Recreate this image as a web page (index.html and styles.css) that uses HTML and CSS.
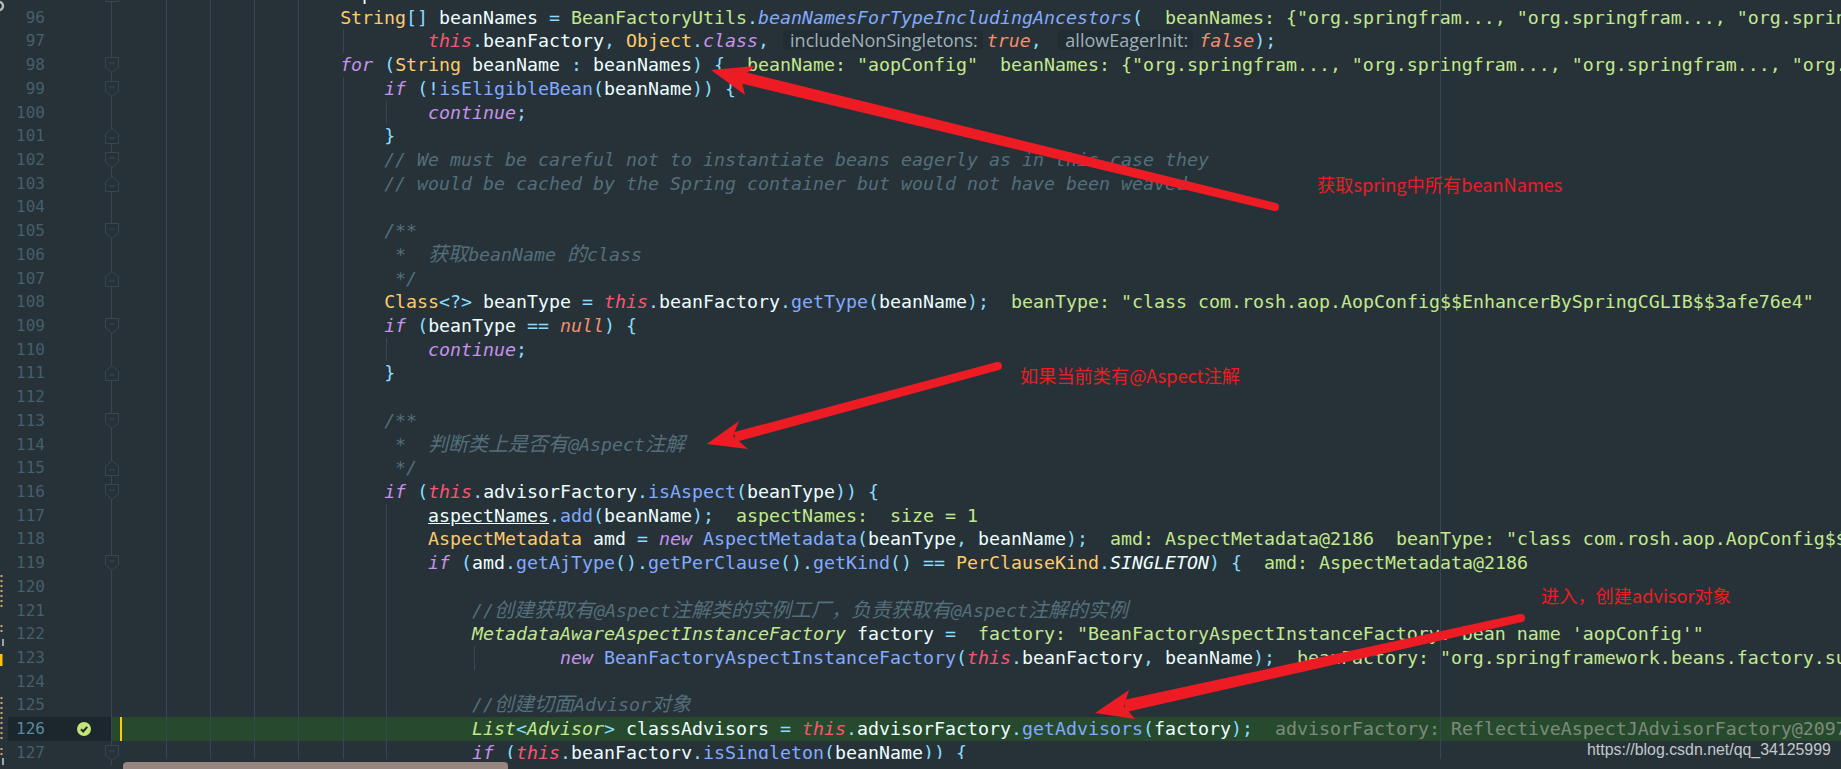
FILE: index.html
```html
<!DOCTYPE html>
<html lang="en">
<head>
<meta charset="utf-8">
<title>AnnotationAwareAspectJ source</title>
<link rel="stylesheet" href="styles.css">
</head>
<body>
<svg width="0" height="0" class="defs">
  <defs>
    <g id="fold-open"><path d="M.5 .5H13.5V10L7 15.5.5 10Z"/><path d="M4 6H10"/></g>
    <g id="fold-close"><path d="M.5 15.5H13.5V6L7 .5.5 6Z"/><path d="M4 10H10"/></g>
  </defs>
</svg>
<main class="editor">
  <div class="lines">
    <div class="row"><div class="gutter"><span class="num">95</span><svg class="fold" viewBox="0 0 14 16"><use href="#fold-close"/></svg></div><div class="code">                    aspectNames</div></div>

    <div class="row"><div class="gutter"><span class="num">96</span></div><div class="code">                    <span class="y">String</span><span class="p">[]</span> beanNames <span class="p">=</span> <span class="g">BeanFactoryUtils</span><span class="p">.</span><span class="mi">beanNamesForTypeIncludingAncestors</span><span class="p">(</span>  <span class="d">beanNames: {"org.springfram..., "org.springfram..., "org.springfram..., "org.springfram...</span></div></div>

    <div class="row g5"><div class="gutter"><span class="num">97</span></div><div class="code">                            <span class="t">this</span><span class="p">.</span>beanFactory<span class="p">,</span> <span class="y">Object</span><span class="p">.</span><span class="k">class</span><span class="p">,</span> <span class="hint">includeNonSingletons:</span><span class="l">true</span><span class="p">,</span> <span class="hint hint-b">allowEagerInit:</span><span class="l">false</span><span class="p">);</span></div></div>

    <div class="row"><div class="gutter"><span class="num">98</span><svg class="fold" viewBox="0 0 14 16"><use href="#fold-open"/></svg></div><div class="code">                    <span class="k">for</span> <span class="p">(</span><span class="y">String</span> beanName <span class="p">:</span> beanNames<span class="p">)</span> <span class="p">{</span>  <span class="d">beanName: "aopConfig"  beanNames: {"org.springfram..., "org.springfram..., "org.springfram..., "org.springfram...</span></div></div>

    <div class="row g5"><div class="gutter"><span class="num">99</span><svg class="fold" viewBox="0 0 14 16"><use href="#fold-open"/></svg></div><div class="code">                        <span class="k">if</span> <span class="p">(!</span><span class="m">isEligibleBean</span><span class="p">(</span>beanName<span class="p">))</span> <span class="p">{</span></div></div>

    <div class="row g5 g6"><div class="gutter"><span class="num">100</span></div><div class="code">                            <span class="k">continue</span><span class="p">;</span></div></div>

    <div class="row g5"><div class="gutter"><span class="num">101</span><svg class="fold" viewBox="0 0 14 16"><use href="#fold-close"/></svg></div><div class="code">                        <span class="p">}</span></div></div>

    <div class="row g5"><div class="gutter"><span class="num">102</span><svg class="fold" viewBox="0 0 14 16"><use href="#fold-open"/></svg></div><div class="code">                        <span class="c">// We must be careful not to instantiate beans eagerly as in this case they</span></div></div>

    <div class="row g5"><div class="gutter"><span class="num">103</span><svg class="fold" viewBox="0 0 14 16"><use href="#fold-close"/></svg></div><div class="code">                        <span class="c">// would be cached by the Spring container but would not have been weaved.</span></div></div>

    <div class="row g5"><div class="gutter"><span class="num">104</span></div><div class="code"></div></div>

    <div class="row g5"><div class="gutter"><span class="num">105</span><svg class="fold" viewBox="0 0 14 16"><use href="#fold-open"/></svg></div><div class="code">                        <span class="c">/**</span></div></div>

    <div class="row g5"><div class="gutter"><span class="num">106</span></div><div class="code">                        <span class="c"> *  <span class="cn">获取</span>beanName <span class="cn">的</span>class</span></div></div>

    <div class="row g5"><div class="gutter"><span class="num">107</span><svg class="fold" viewBox="0 0 14 16"><use href="#fold-close"/></svg></div><div class="code">                        <span class="c"> */</span></div></div>

    <div class="row g5"><div class="gutter"><span class="num">108</span></div><div class="code">                        <span class="y">Class</span><span class="p">&lt;?&gt;</span> beanType <span class="p">=</span> <span class="t">this</span><span class="p">.</span>beanFactory<span class="p">.</span><span class="m">getType</span><span class="p">(</span>beanName<span class="p">);</span>  <span class="d">beanType: "class com.rosh.aop.AopConfig$$EnhancerBySpringCGLIB$$3afe76e4"</span></div></div>

    <div class="row g5"><div class="gutter"><span class="num">109</span><svg class="fold" viewBox="0 0 14 16"><use href="#fold-open"/></svg></div><div class="code">                        <span class="k">if</span> <span class="p">(</span>beanType <span class="p">==</span> <span class="l">null</span><span class="p">)</span> <span class="p">{</span></div></div>

    <div class="row g5 g6"><div class="gutter"><span class="num">110</span></div><div class="code">                            <span class="k">continue</span><span class="p">;</span></div></div>

    <div class="row g5"><div class="gutter"><span class="num">111</span><svg class="fold" viewBox="0 0 14 16"><use href="#fold-close"/></svg></div><div class="code">                        <span class="p">}</span></div></div>

    <div class="row g5"><div class="gutter"><span class="num">112</span></div><div class="code"></div></div>

    <div class="row g5"><div class="gutter"><span class="num">113</span><svg class="fold" viewBox="0 0 14 16"><use href="#fold-open"/></svg></div><div class="code">                        <span class="c">/**</span></div></div>

    <div class="row g5"><div class="gutter"><span class="num">114</span></div><div class="code">                        <span class="c"> *  <span class="cn">判断类上是否有</span>@Aspect<span class="cn">注解</span></span></div></div>

    <div class="row g5"><div class="gutter"><span class="num">115</span><svg class="fold" viewBox="0 0 14 16"><use href="#fold-close"/></svg></div><div class="code">                        <span class="c"> */</span></div></div>

    <div class="row g5"><div class="gutter"><span class="num">116</span><svg class="fold" viewBox="0 0 14 16"><use href="#fold-open"/></svg></div><div class="code">                        <span class="k">if</span> <span class="p">(</span><span class="t">this</span><span class="p">.</span>advisorFactory<span class="p">.</span><span class="m">isAspect</span><span class="p">(</span>beanType<span class="p">))</span> <span class="p">{</span></div></div>

    <div class="row g5 g6"><div class="gutter"><span class="num">117</span></div><div class="code">                            <span class="u">aspectNames</span><span class="p">.</span><span class="m">add</span><span class="p">(</span>beanName<span class="p">);</span>  <span class="d">aspectNames:  size = 1</span></div></div>

    <div class="row g5 g6"><div class="gutter"><span class="num">118</span></div><div class="code">                            <span class="y">AspectMetadata</span> amd <span class="p">=</span> <span class="k">new</span> <span class="m">AspectMetadata</span><span class="p">(</span>beanType<span class="p">,</span> beanName<span class="p">);</span>  <span class="d">amd: AspectMetadata@2186  beanType: "class com.rosh.aop.AopConfig$$EnhancerBySpringCGLIB$$3afe76e4"</span></div></div>

    <div class="row g5 g6"><div class="gutter"><span class="num">119</span><svg class="fold" viewBox="0 0 14 16"><use href="#fold-open"/></svg></div><div class="code">                            <span class="k">if</span> <span class="p">(</span>amd<span class="p">.</span><span class="m">getAjType</span><span class="p">().</span><span class="m">getPerClause</span><span class="p">().</span><span class="m">getKind</span><span class="p">()</span> <span class="p">==</span> <span class="y">PerClauseKind</span><span class="p">.</span><span class="i">SINGLETON</span><span class="p">)</span> <span class="p">{</span>  <span class="d">amd: AspectMetadata@2186</span></div></div>

    <div class="row g5 g6"><div class="gutter"><span class="num">120</span></div><div class="code"></div></div>

    <div class="row g5 g6"><div class="gutter"><span class="num">121</span></div><div class="code">                                <span class="c">//<span class="cn">创建获取有</span>@Aspect<span class="cn">注解类的实例工厂，负责获取有</span>@Aspect<span class="cn">注解的实例</span></span></div></div>

    <div class="row g5 g6"><div class="gutter"><span class="num">122</span></div><div class="code">                                <span class="gi">MetadataAwareAspectInstanceFactory</span> factory <span class="p">=</span>  <span class="d">factory: "BeanFactoryAspectInstanceFactory: bean name 'aopConfig'"</span></div></div>

    <div class="row g5 g6 g8"><div class="gutter"><span class="num">123</span></div><div class="code">                                        <span class="k">new</span> <span class="m">BeanFactoryAspectInstanceFactory</span><span class="p">(</span><span class="t">this</span><span class="p">.</span>beanFactory<span class="p">,</span> beanName<span class="p">);</span>  <span class="d">beanFactory: "org.springframework.beans.factory.support.DefaultListable</span></div></div>

    <div class="row g5 g6"><div class="gutter"><span class="num">124</span></div><div class="code"></div></div>

    <div class="row g5 g6"><div class="gutter"><span class="num">125</span></div><div class="code">                                <span class="c">//<span class="cn">创建切面</span>Advisor<span class="cn">对象</span></span></div></div>

    <div class="row g5 g6 active"><div class="gutter"><span class="num">126</span><svg class="mark" viewBox="0 0 14 14"><circle cx="7" cy="7" r="7"/><path d="M4 7.2 6.2 9.5 10.2 4.8"/></svg></div><div class="code"><span class="caret"></span>                                <span class="gi">List</span><span class="p">&lt;</span><span class="gi">Advisor</span><span class="p">&gt;</span> classAdvisors <span class="p">=</span> <span class="t">this</span><span class="p">.</span>advisorFactory<span class="p">.</span><span class="m">getAdvisors</span><span class="p">(</span>factory<span class="p">);</span>  <span class="dim">advisorFactory: ReflectiveAspectJAdvisorFactory@2097</span></div></div>

    <div class="row g5 g6"><div class="gutter"><span class="num">127</span><svg class="fold" viewBox="0 0 14 16"><use href="#fold-open"/></svg></div><div class="code">                                <span class="k">if</span> <span class="p">(</span><span class="t">this</span><span class="p">.</span>beanFactory<span class="p">.</span><span class="m">isSingleton</span><span class="p">(</span>beanName<span class="p">))</span> <span class="p">{</span></div></div>
  </div>

  <div class="track"><div class="thumb"></div></div>

  <svg class="overlay" viewBox="0 0 1841 769" aria-hidden="true">
    <circle class="pin" cx="-1" cy="6" r="4"/>
    <path class="dots" d="M1.5 575V610M1.5 625V632M1.5 697V742M1.5 748V757"/>
    <path class="bar" d="M3 639V646M3 758V765"/>
    <rect class="warn" x="0" y="654" width="2.5" height="12"/>
    <g class="arrow">
      <path d="M711 70 755 66 741 78 745 95Z"/>
      <path d="M741.4 71.2 738.6 82.8 1274 211 1276 203Z"/>
      <circle cx="1275" cy="207" r="4"/>
      <path d="M706.6 444 739 421 733 436 748 449Z"/>
      <path d="M736.3 441.8 733.7 432.2 997 362 999 370Z"/>
      <circle cx="998" cy="366" r="4"/>
      <path d="M1095 713 1129 690 1124 706 1135 719Z"/>
      <path d="M1126.3 711.9 1123.7 700.1 1520 614 1522 622Z"/>
      <circle cx="1521" cy="618" r="4"/>
    </g>
  </svg>

  <span class="note note-a">获取spring中所有beanNames</span>
  <span class="note note-b">如果当前类有@Aspect注解</span>
  <span class="note note-c">进入，创建advisor对象</span>
  <span class="watermark">https://blog.csdn.net/qq_34125999</span>
</main>
</body>
</html>
```

FILE: styles.css
```css
html, body {
  margin: 0;
  padding: 0;
  background: #263238;
}

.defs {
  position: absolute;
}

.editor {
  position: relative;
  width: 1841px;
  height: 769px;
  overflow: hidden;
  background: #263238;
  font-family: "DejaVu Sans Mono", "Noto Sans CJK SC", monospace;
  font-size: 18.27px;
  color: #eeffff;
}

.lines {
  margin-top: -18.1px;
}

.row {
  display: flex;
  height: 23.73px;
  line-height: 23.73px;
}

.gutter {
  position: relative;
  z-index: 2;
  flex: none;
  display: flex;
  align-items: center;
  box-sizing: border-box;
  width: 104px;
  margin-left: 8px;
  border-right: 1px solid #37474f;
}

.num {
  width: 37px;
  text-align: right;
  font-size: 16px;
  color: #455f6b;
}

.fold {
  position: absolute;
  right: -8px;
  top: 4px;
  width: 14px;
  height: 16px;
  fill: #263238;
  stroke: #37474f;
  stroke-width: 1;
}

.mark {
  width: 14px;
  height: 14px;
  margin-left: 31.5px;
  fill: #c5e478;
}

.mark path {
  fill: none;
  stroke: #1c262d;
  stroke-width: 2;
}

.code {
  --line: #37474f;
  --a: transparent;
  --b: transparent;
  --c: transparent;
  position: relative;
  flex: 1;
  min-width: 0;
  box-sizing: border-box;
  padding-left: 8.2px;
  white-space: pre;
  overflow: hidden;
  background-repeat: no-repeat;
  background-size: 1px 100%;
  background-image:
    linear-gradient(var(--line), var(--line)),
    linear-gradient(var(--line), var(--line)),
    linear-gradient(var(--line), var(--line)),
    linear-gradient(var(--line), var(--line)),
    linear-gradient(var(--a), var(--a)),
    linear-gradient(var(--b), var(--b)),
    linear-gradient(var(--c), var(--c)),
    linear-gradient(var(--line), var(--line));
  background-position: 54px 0, 98px 0, 142px 0, 186px 0, 231px 0, 274px 0, 362px 0, 1328px 0;
}

.g5 .code { --a: #37474f; }
.g6 .code { --b: #37474f; }
.g8 .code { --c: #37474f; }

.active .gutter { background: #1c262d; }
.active .num { color: #5b8a9f; }
.active .code { background-color: #274a2e; }

.caret {
  position: absolute;
  left: 8px;
  top: 0;
  width: 2px;
  height: 100%;
  background: #ffcc00;
}

.k { color: #c792ea; font-style: italic; }
.t { color: #ff5370; font-style: italic; }
.y { color: #ffcb6b; }
.g { color: #c3e88d; }
.gi { color: #c3e88d; font-style: italic; }
.m { color: #82aaff; }
.mi { color: #82aaff; font-style: italic; }
.p { color: #89ddff; }
.c { color: #546e7a; font-style: italic; }
.cn { font-size: 20px; line-height: 1; }
.l { color: #f78c6c; font-style: italic; }
.i { font-style: italic; }
.u { text-decoration: underline; }
.d { color: #c3e88d; }
.dim { color: #7d8a7b; }

.hint {
  display: inline-block;
  height: 20px;
  line-height: 20px;
  padding: 0 5px 0 7px;
  margin: 0 4px 0 3px;
  border-radius: 4px;
  background: #222c33;
  color: #9fb0b8;
  font-family: "Open Sans", sans-serif;
  font-size: 18px;
}

.hint-b {
  margin: 0 6px 0 5.5px;
}

.track {
  position: absolute;
  left: 120px;
  right: 0;
  bottom: 0;
  height: 10px;
  background: #263238;
}

.thumb {
  width: 385px;
  height: 7px;
  margin: 3px 0 0 2.7px;
  border-radius: 4px 4px 0 0;
  background: #97867f;
}

.overlay {
  position: absolute;
  left: 0;
  top: 0;
  z-index: 3;
  width: 1841px;
  height: 769px;
  pointer-events: none;
}

.pin { fill: #1c262d; stroke: #b5b5b5; stroke-width: 2.5; }
.dots { fill: none; stroke: #c9a96e; stroke-width: 2; stroke-dasharray: 2 3; }
.bar { fill: none; stroke: #9aa5a8; stroke-width: 2; }
.warn { fill: #ffc107; }
.arrow { fill: #ed1c24; }

.note {
  position: absolute;
  z-index: 4;
  color: #ed1c24;
  font-family: "Noto Sans CJK SC", sans-serif;
  font-size: 18.2px;
  line-height: 24px;
  white-space: nowrap;
}

.note-a { left: 1317px; top: 172px; }
.note-b { left: 1020px; top: 363px; }
.note-c { left: 1541px; top: 583px; }

.watermark {
  position: absolute;
  z-index: 4;
  left: 1587px;
  top: 740px;
  color: #c4c8ca;
  font-family: "Liberation Sans", sans-serif;
  font-size: 15.9px;
  line-height: 20px;
  white-space: nowrap;
}
```
